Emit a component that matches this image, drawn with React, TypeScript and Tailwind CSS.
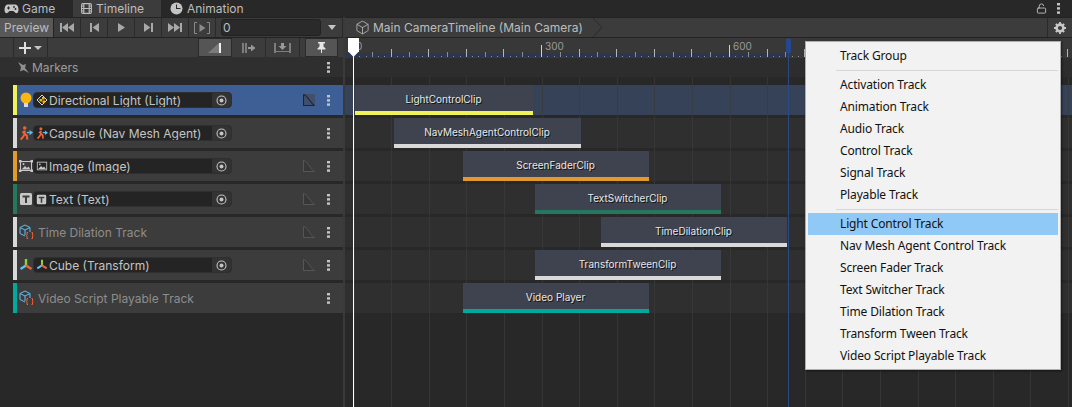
import React from "react";
import { Box, LockOpen, Film } from "lucide-react";

type IconProps = { s?: number };

const GamepadIcon = () => (
  <svg width="15" height="10" viewBox="0 0 15 10">
    <path d="M3.5 0.5 H11.5 C13.5 0.5 14.5 3 14.5 6 C14.5 9 12.5 10 11 8.5 L9.5 7 H5.5 L4 8.5 C2.5 10 0.5 9 0.5 6 C0.5 3 1.5 0.5 3.5 0.5 Z" fill="#c4c4c4" />
    <path d="M3 4 H6 M4.5 2.5 V5.5" stroke="#282828" strokeWidth="1" />
    <circle cx="10" cy="3" r="0.9" fill="#282828" />
    <circle cx="11.5" cy="5" r="0.9" fill="#282828" />
  </svg>
);

const ClockIcon = () => (
  <svg width="13" height="13" viewBox="0 0 13 13">
    <circle cx="6.5" cy="6.5" r="6" fill="#c4c4c4" />
    <path d="M6 2.5 H7 V6 H10.5 V7 H6 Z" fill="#282828" />
  </svg>
);

const GearIcon = () => (
  <svg width="12" height="12" viewBox="0 0 12 12">
    <circle cx="6" cy="6" r="3.4" fill="none" stroke="#c8c8c8" strokeWidth="2.6" />
    <path d="M6 0 V12 M0 6 H12 M1.8 1.8 L10.2 10.2 M10.2 1.8 L1.8 10.2" stroke="#c8c8c8" strokeWidth="1.8" strokeDasharray="2.2 7.6" />
  </svg>
);

const BulbIcon = ({ s = 14 }: IconProps) => (
  <svg width={s} height={s + 2} viewBox="0 0 14 16">
    <circle cx="7" cy="6" r="5.5" fill="#f9b70f" />
    <rect x="5" y="11" width="4" height="4" fill="#d9d9d9" />
  </svg>
);

const LightSmallIcon = () => (
  <svg width="12" height="12" viewBox="0 0 12 12">
    <path d="M6 1 L11 6 L6 11 L1 6 Z" fill="none" stroke="#d8d8d8" strokeWidth="1" />
    <rect x="3.5" y="5" width="2.5" height="2.5" fill="#f4b400" />
    <rect x="6" y="3" width="2.5" height="2.5" fill="#f4b400" />
    <rect x="6.5" y="6.5" width="2.5" height="2.5" fill="#f4b400" />
  </svg>
);

const AgentIcon = ({ s = 14 }: IconProps) => (
  <svg width={s} height={s} viewBox="0 0 16 16">
    <circle cx="6.5" cy="2.2" r="2" fill="#f0623a" />
    <path d="M6.5 5 L6.5 9 L9 11 L9.5 15.5 M6.5 9 L5 12 L2 15.5 M6.5 5.5 L4 8" stroke="#f0623a" strokeWidth="2.2" fill="none" />
    <path d="M9 7.5 H12" stroke="#5bc2f2" strokeWidth="1.6" />
    <path d="M12 4.5 L16 7.5 L12 10.5 Z" fill="#5bc2f2" />
  </svg>
);

const ImageIcon = ({ s = 14, corners = false }: IconProps & { corners?: boolean }) => (
  <svg width={s} height={s} viewBox="0 0 14 14">
    <rect x="1.5" y="2.5" width="11" height="9" fill="none" stroke="#c8c8c8" />
    {corners && (
      <g fill="#c8c8c8">
        <rect x="0" y="1" width="2.5" height="2.5" />
        <rect x="11.5" y="1" width="2.5" height="2.5" />
        <rect x="0" y="10.5" width="2.5" height="2.5" />
        <rect x="11.5" y="10.5" width="2.5" height="2.5" />
      </g>
    )}
    <circle cx="4.5" cy="5" r="1" fill="#c8c8c8" />
    <path d="M2.5 10.5 L6 7 L8 9 L9.5 7.5 L11.5 10.5 Z" fill="#c8c8c8" />
  </svg>
);

const TextIcon = ({ s = 14 }: IconProps) => (
  <svg width={s} height={s} viewBox="0 0 14 14">
    <rect x="1" y="1" width="12" height="12" rx="1.5" fill="#c8c8c8" />
    <path d="M3.5 3.5 H10.5 V5.5 H8 V11 H6 V5.5 H3.5 Z" fill="#3c3c3c" />
  </svg>
);

const ScriptCubeIcon = () => (
  <svg width="15" height="16" viewBox="0 0 15 16">
    <path d="M6 1 L11 3.5 V8 M6 1 L1 3.5 V9.5 L6 12 M1 3.5 L6 6 L11 3.5 M6 6 V11" fill="none" stroke="#62bdf0" strokeWidth="1" />
    <path d="M9 8.5 H8 V11 L7.5 11.5 L8 12 V14.5 H9 M12.5 8.5 H13.5 V11 L14 11.5 L13.5 12 V14.5 H12.5" fill="none" stroke="#f0623a" strokeWidth="1" />
  </svg>
);

const TransformIcon = ({ s = 14 }: IconProps) => (
  <svg width={s} height={s} viewBox="0 0 14 14">
    <path d="M7 7 V1" stroke="#8ed13c" strokeWidth="2.4" />
    <path d="M7 7.5 L1.5 11" stroke="#5bc2f2" strokeWidth="2.4" />
    <path d="M7 7.5 L12.5 11" stroke="#f0623a" strokeWidth="2.4" />
  </svg>
);

const CurveIcon = ({ bright = false }: { bright?: boolean }) =>
  bright ? (
    <svg width="12" height="12" viewBox="0 0 12 12">
      <rect width="12" height="12" fill="#414f6c" />
      <path d="M0.5 0.5 C5 1.5 7 9 11.5 11.5 M0.5 0.5 V11.5 H11.5" fill="none" stroke="#20242c" strokeWidth="1.1" />
    </svg>
  ) : (
    <svg width="12" height="12" viewBox="0 0 12 12">
      <path d="M0.5 0.5 C5 1.5 7 9 11.5 11.5 L0.5 11.5 Z" fill="#373737" />
      <path d="M0.5 0.5 V11.5 H11.5 M0.5 0.5 C5 1.5 7 9 11.5 11.5" fill="none" stroke="#565656" />
    </svg>
  );

const TargetIcon = () => (
  <svg width="11" height="11" viewBox="0 0 11 11">
    <circle cx="5.5" cy="5.5" r="4.5" fill="none" stroke="#c4c4c4" strokeWidth="1.1" />
    <circle cx="5.5" cy="5.5" r="2" fill="#c4c4c4" />
  </svg>
);

const Kebab = ({ color = "#c4c4c4" }: { color?: string }) => (
  <svg width="3" height="11" viewBox="0 0 3 11" fill={color}>
    <rect y="0" width="3" height="2.4" />
    <rect y="4.2" width="3" height="2.4" />
    <rect y="8.4" width="3" height="2.4" />
  </svg>
);

const Transport = ({ kind }: { kind: string }) => {
  const c = "#a8a8a8";
  if (kind === "first")
    return (
      <svg width="14" height="9" viewBox="0 0 14 9" fill={c}>
        <rect x="0" width="2" height="9" />
        <path d="M8 0 V9 L2 4.5 Z M14 0 V9 L8 4.5 Z" />
      </svg>
    );
  if (kind === "prev")
    return (
      <svg width="9" height="9" viewBox="0 0 9 9" fill={c}>
        <rect x="0" width="2" height="9" />
        <path d="M9 0 V9 L2.5 4.5 Z" />
      </svg>
    );
  if (kind === "play")
    return (
      <svg width="7" height="9" viewBox="0 0 7 9" fill={c}>
        <path d="M0 0 V9 L7 4.5 Z" />
      </svg>
    );
  if (kind === "next")
    return (
      <svg width="9" height="9" viewBox="0 0 9 9" fill={c}>
        <rect x="7" width="2" height="9" />
        <path d="M0 0 V9 L6.5 4.5 Z" />
      </svg>
    );
  if (kind === "last")
    return (
      <svg width="14" height="9" viewBox="0 0 14 9" fill={c}>
        <rect x="12" width="2" height="9" />
        <path d="M0 0 V9 L6 4.5 Z M6 0 V9 L12 4.5 Z" />
      </svg>
    );
  return (
    <svg width="16" height="12" viewBox="0 0 16 12" fill="none" stroke="#8a8a8a">
      <path d="M3 .5 H.5 V11.5 H3 M13 .5 H15.5 V11.5 H13" />
      <path d="M5.5 2 V10 L11.5 6 Z" fill="#8a8a8a" stroke="none" />
    </svg>
  );
};

type Track = {
  strip: string;
  icon: React.ReactNode;
  small?: React.ReactNode;
  label: string;
  curve: boolean;
  selected?: boolean;
};

const tracks: Track[] = [
  { strip: "bg-[#f0f25a]", icon: <BulbIcon />, small: <LightSmallIcon />, label: "Directional Light (Light)", curve: true, selected: true },
  { strip: "bg-[#d9d9d9]", icon: <AgentIcon />, small: <AgentIcon s={12} />, label: "Capsule (Nav Mesh Agent)", curve: false },
  { strip: "bg-[#e39a2c]", icon: <ImageIcon corners />, small: <ImageIcon s={12} />, label: "Image (Image)", curve: true },
  { strip: "bg-[#23785f]", icon: <TextIcon />, small: <TextIcon s={11} />, label: "Text (Text)", curve: true },
  { strip: "bg-[#d9d9d9]", icon: <ScriptCubeIcon />, label: "Time Dilation Track", curve: true },
  { strip: "bg-[#d9d9d9]", icon: <TransformIcon />, small: <TransformIcon s={12} />, label: "Cube (Transform)", curve: true },
  { strip: "bg-[#00a99d]", icon: <ScriptCubeIcon />, label: "Video Script Playable Track", curve: false },
];

const clips = [
  { label: "LightControlClip", cls: "left-[10px] w-[178px]", bar: "bg-[#f0f25a]", row: 0 },
  { label: "NavMeshAgentControlClip", cls: "left-[49px] w-[187px]", bar: "bg-[#d9d9d9]", row: 1 },
  { label: "ScreenFaderClip", cls: "left-[118px] w-[186px]", bar: "bg-[#e39a2c]", row: 2 },
  { label: "TextSwitcherClip", cls: "left-[190px] w-[186px]", bar: "bg-[#23785f]", row: 3 },
  { label: "TimeDilationClip", cls: "left-[256px] w-[186px]", bar: "bg-[#d9d9d9]", row: 4 },
  { label: "TransformTweenClip", cls: "left-[190px] w-[186px]", bar: "bg-[#d9d9d9]", row: 5 },
  { label: "Video Player", cls: "left-[118px] w-[186px]", bar: "bg-[#00a99d]", row: 6 },
];

const menuTop = ["Activation Track", "Animation Track", "Audio Track", "Control Track", "Signal Track", "Playable Track"];
const menuBottom = [
  "Light Control Track",
  "Nav Mesh Agent Control Track",
  "Screen Fader Track",
  "Text Switcher Track",
  "Time Dilation Track",
  "Transform Tween Track",
  "Video Script Playable Track",
];

const PX = 37.6;
const gridXs = Array.from({ length: 20 }, (_, i) => 8.5 + i * PX);

const Ruler = () => (
  <svg className="absolute inset-0" width="727" height="20">
    <rect x="0" y="15" width="441" height="4" fill="#2c3650" />
    {Array.from({ length: 116 }, (_, i) => {
      const x = Math.round(8 + i * 6.267) + 0.5;
      const major = i % 30 === 0;
      const mid = i % 6 === 0;
      const half = i % 3 === 0;
      const h = major ? 12 : mid ? 8 : half ? 5 : 1;
      const color = major ? "#d0d0d0" : mid ? "#b5b5b5" : "#8d8d8d";
      return <line key={i} x1={x} x2={x} y1={19 - h} y2={19} stroke={color} />;
    })}
  </svg>
);

const MenuItem = ({ label, active }: { label: string; active?: boolean }) => (
  <div className={`h-[22px] ml-[2px] mr-[2px] pl-[32px] flex items-center ${active ? "bg-[#90c8f6]" : ""}`}>{label}</div>
);

export default function App() {
  return (
    <div className="relative w-[1072px] h-[407px] overflow-hidden bg-[#282828] font-['Inter',sans-serif] text-[12px] text-[#c4c4c4]">
      {/* tabs */}
      <div className="h-[17px] flex items-stretch bg-[#282828] text-[#bdbdbd]">
        <div className="w-[73px] flex items-center gap-[3px] pl-[4px]">
          <GamepadIcon />
          <span>Game</span>
        </div>
        <div className="w-[88px] flex items-center gap-[3px] pl-[7px] bg-[#3c3c3c]">
          <Film size={13} />
          <span>Timeline</span>
        </div>
        <div className="flex items-center gap-[4px] pl-[9px]">
          <ClockIcon />
          <span>Animation</span>
        </div>
        <div className="ml-auto flex items-center gap-[10px] pr-[12px]">
          <LockOpen size={11} />
          <Kebab />
        </div>
      </div>

      <div className="flex h-[390px]">
        {/* left panel */}
        <div className="w-[343px] shrink-0">
          <div className="h-[21px] flex bg-[#3c3c3c] border-t border-b border-[#232323]">
            <div className="w-[54px] flex items-center justify-center bg-[#585858] text-[#bdbdbd] border-r border-[#232323]">Preview</div>
            {["first", "prev", "play", "next", "last", "range"].map((k) => (
              <div key={k} className="w-[27px] flex items-center justify-center border-r border-[#2a2a2a]">
                <Transport kind={k} />
              </div>
            ))}
            <div className="ml-[5px] my-[1px] w-[100px] rounded-[3px] bg-[#2a2a2a] border border-[#212121] pl-[1px] text-[#bdbdbd] flex items-center">0</div>
            <div className="flex-1 flex items-center justify-center border-r border-[#2a2a2a]">
              <div className="w-0 h-0 border-x-[4px] border-x-transparent border-t-[5px] border-t-[#c4c4c4]" />
            </div>
          </div>

          <div className="h-[20px] flex bg-[#3c3c3c] border-b border-[#303030]">
            <div className="ml-[13px] w-[35px] flex items-center justify-center gap-[3px] border-x border-[#2a2a2a]">
              <svg width="12" height="12" viewBox="0 0 12 12" fill="#e0e0e0">
                <rect x="5" width="2" height="12" />
                <rect y="5" width="12" height="2" />
              </svg>
              <div className="w-0 h-0 border-x-[4px] border-x-transparent border-t-[4px] border-t-[#c4c4c4]" />
            </div>
            <div className="ml-[150px] w-[34px] flex items-center justify-center bg-[#555] border border-[#2a2a2a]">
              <svg width="14" height="10" viewBox="0 0 14 10">
                <path d="M0 10 L11 0 V10 Z" fill="#7b7b7b" />
                <rect x="11" width="2" height="10" fill="#eee" />
              </svg>
            </div>
            <div className="w-[34px] flex items-center justify-center border-r border-[#2a2a2a]">
              <svg width="14" height="10" viewBox="0 0 14 10" fill="#7d7d7d">
                <rect x="0" width="2" height="10" />
                <rect x="3" width="2" height="10" />
                <path d="M6 4 H9 V1.5 L13.5 5 L9 8.5 V6 H6 Z" fill="#999" />
              </svg>
            </div>
            <div className="w-[34px] flex items-center justify-center border-r border-[#2a2a2a]">
              <svg width="17" height="10" viewBox="0 0 17 10" fill="#7d7d7d">
                <rect x="0" width="2" height="10" />
                <rect x="15" width="2" height="10" />
                <rect x="2" y="8" width="13" height="1" />
                <path d="M7 0 H10 V3 H12.5 L8.5 7 L4.5 3 H7 Z" fill="#999" />
              </svg>
            </div>
            <div className="ml-[5px] w-[33px] flex items-center justify-center bg-[#555] border border-[#2a2a2a]">
              <svg width="9" height="11" viewBox="0 0 9 11" fill="#e6e6e6">
                <path d="M1 0 H8 V1.5 H6.5 V4.5 L8.5 6.5 V7.5 H5 V11 H4 V7.5 H.5 V6.5 L2.5 4.5 V1.5 H1 Z" />
              </svg>
            </div>
          </div>

          <div className="h-[19px] flex items-center bg-[#2f2f2f] text-[#9d9d9d]">
            <div className="ml-[17px] w-[15px]">
              <svg width="12" height="12" viewBox="0 0 12 12" fill="#8f8f8f">
                <path d="M1 0 L6 3 L9 2 L8 6 L12 11 L6.5 8 L3 9.5 L4 5 Z" />
              </svg>
            </div>
            <span>Markers</span>
            <div className="ml-auto mr-[13px] flex">
              <Kebab />
            </div>
          </div>

          <div className="mt-[8px] ml-[13px] flex flex-col gap-[3px]">
            {tracks.map((t) => (
              <div key={t.label} className={`h-[30px] flex items-center ${t.selected ? "bg-[#3e5f96]" : "bg-[#3c3c3c]"}`}>
                <div className={`w-[4px] h-full ${t.strip}`} />
                <div className="w-[16px] ml-[1px] flex justify-center">{t.icon}</div>
                {t.small ? (
                  <div className="ml-[-1px] w-[199px] h-[16px] flex items-center rounded-[4px] bg-[#242424] border border-[#2f2f2f] overflow-hidden">
                    <div className="w-[15px] flex justify-center shrink-0">{t.small}</div>
                    <span className="flex-1 whitespace-nowrap text-[#c4c4c4] pt-[2px]">{t.label}</span>
                    <div className="w-[19px] h-full bg-[#333] flex items-center justify-center shrink-0">
                      <TargetIcon />
                    </div>
                  </div>
                ) : (
                  <span className="ml-[4px] w-[194px] whitespace-nowrap text-[#8d8d8d] pt-[2px]">{t.label}</span>
                )}
                <div className="ml-auto flex items-center">
                  {t.curve && <CurveIcon bright={t.selected} />}
                  <div className="ml-[12px] mr-[13px] flex">
                    <Kebab />
                  </div>
                </div>
              </div>
            ))}
          </div>
        </div>

        <div className="w-[2px] shrink-0 bg-[#3a3a3a]" />

        {/* timeline */}
        <div className="relative flex-1 min-w-0">
          <div className="h-[21px] flex items-center bg-[#3c3c3c] border-t border-b border-[#232323] text-[#bdbdbd]">
            <div className="ml-[10px] flex items-center gap-[3px] pr-[12px] h-full">
              <Box size={15} strokeWidth={1.3} />
              <span className="whitespace-nowrap">Main CameraTimeline (Main Camera)</span>
            </div>
            <svg width="10" height="19" viewBox="0 0 10 19" className="ml-[-2px]">
              <path d="M0 0 L9 9.5 L0 19" fill="none" stroke="#2a2a2a" />
            </svg>
            <div className="ml-auto w-[25px] h-full flex items-center justify-center border-l border-[#2a2a2a]">
              <GearIcon />
            </div>
          </div>

          <div className="relative h-[20px] bg-[#383838]">
            <Ruler />
            <span className="absolute left-[200px] top-[1px] text-[10px] text-[#9a9a9a]">300</span>
            <span className="absolute left-[388px] top-[1px] text-[10px] text-[#9a9a9a]">600</span>
            <span className="absolute left-[11px] top-[1px] text-[10px] text-[#9a9a9a]">0</span>
          </div>

          <div className="h-[19px] bg-[#2d2d2d]" />

          <div className="relative mt-[8px] flex flex-col gap-[3px]">
            {tracks.map((t) => (
              <div key={t.label} className={`h-[30px] ${t.selected ? "bg-[#354258]" : "bg-[#2f2f2f]"}`} />
            ))}
            <svg className="absolute left-0 top-[-8px]" width="727" height="340">
              {gridXs.map((x) => (
                <line key={x} x1={Math.round(x) + 0.5} x2={Math.round(x) + 0.5} y1="0" y2="340" stroke="#3a3a3a" strokeOpacity="0.7" />
              ))}
            </svg>
            {clips.map((c) => (
              <div
                key={c.label}
                className={`absolute h-[30px] bg-[#3f434f] flex flex-col ${c.cls}`}
                style={{ top: c.row * 33 }}
              >
                <div className="flex-1 flex items-center justify-center pt-[3px] pr-px text-[10px] text-[#e8e8e8] [text-shadow:1px_1px_0_#111]">{c.label}</div>
                <div className={`h-[4px] ${c.bar}`} />
              </div>
            ))}
          </div>

          {/* region end marker */}
          <div className="absolute left-[443px] top-[21px] bottom-0 w-px bg-[#2c4a82]" />
          <div className="absolute left-[441px] top-[22px] w-[5px] h-[14px] bg-[#24478f]" />

          {/* playhead */}
          <div className="absolute left-[8px] top-[21px] bottom-0 w-px bg-white" />
          <div className="absolute left-[3px] top-[21px] w-[11px] h-[19px] bg-white [clip-path:polygon(0_0,100%_0,100%_70%,50%_100%,0_70%)]" />
        </div>
      </div>

      {/* add track menu */}
      <div className="absolute left-[805px] top-[41px] w-[256px] h-[329px] bg-[#f2f2f2] border border-[#aeaeae] shadow-[1px_1px_2px_rgba(0,0,0,0.5)] pt-[3px] text-[#111] font-['Noto_Sans',sans-serif] text-[12px] tracking-[-0.15px]">
        <MenuItem label="Track Group" />
        <div className="h-px ml-[30px] mr-[2px] mt-[3px] mb-[3px] bg-[#d7d7d7]" />
        {menuTop.map((m) => (
          <MenuItem key={m} label={m} />
        ))}
        <div className="h-px ml-[30px] mr-[2px] mt-[3px] mb-[3px] bg-[#d7d7d7]" />
        {menuBottom.map((m, i) => (
          <MenuItem key={m} label={m} active={i === 0} />
        ))}
      </div>
    </div>
  );
}
